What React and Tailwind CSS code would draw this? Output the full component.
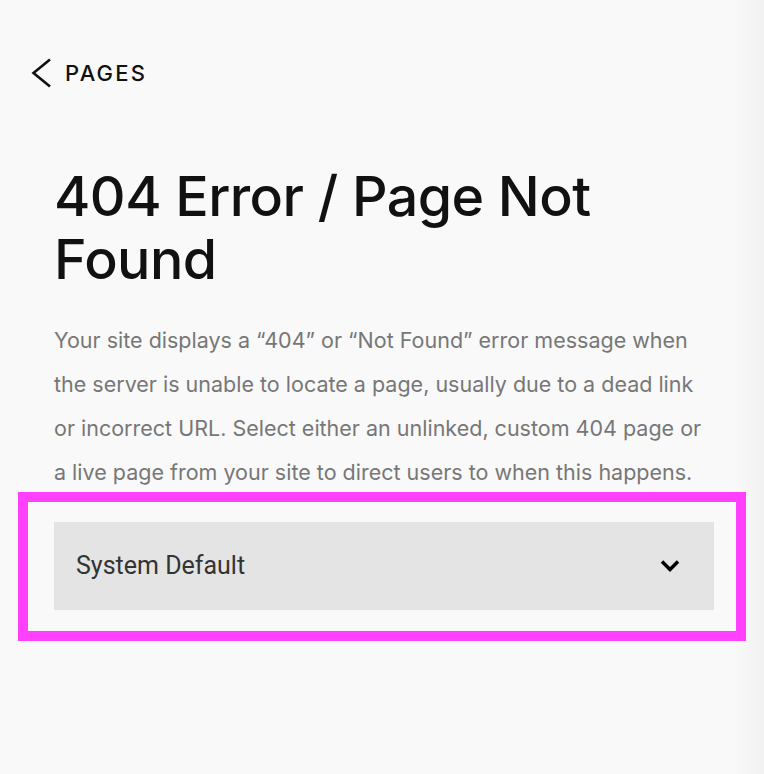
import React from "react";

export default function App() {
  return (
    <div
      className="relative w-[764px] h-[774px] overflow-hidden bg-[#f9f9f9]"
      style={{ fontFamily: "Inter, 'Noto Sans', sans-serif" }}
    >
      {/* faint shadow along the right edge */}
      <div className="absolute top-0 right-0 h-full w-[30px] bg-gradient-to-r from-[#f9f9f9] to-[#f1f1f1]" />

      <div className="relative pt-[58px] px-[54px]">
        <a href="#" className="flex items-center -ml-[23px] gap-[12px] text-[#111]">
          <svg width="22" height="30" viewBox="0 0 22 30" fill="none">
            <path d="M19 1.5 L2.5 15 L19 28.5" stroke="#111" strokeWidth="2.6" />
          </svg>
          <span className="text-[22px] font-medium tracking-[0.1em] leading-[30px]">PAGES</span>
        </a>

        <h1 className="mt-[76px] text-[55.5px] font-medium leading-[63px] tracking-[-0.01em] text-[#111]">
          404 Error / Page Not Found
        </h1>

        <p className="mt-[28px] text-[21.5px] leading-[44px] text-[#777]">
          Your site displays a “404” or “Not Found” error message when the server is unable to locate a
          page, usually due to a dead link or incorrect URL. Select either an unlinked, custom 404 page or
          a live page from your site to direct users to when this happens.
        </p>

        <div className="-mx-[36px] -mt-[2px] border-[10px] border-[#ff40ff] pt-[20px] pb-[21px] pl-[26px] pr-[22px]">
          <button className="flex w-full h-[88px] items-center justify-between bg-[#e4e4e4] pl-[22px] pr-[34px] text-left">
            <span
              className="text-[25px] text-[#333]"
              style={{ fontFamily: "Roboto, 'Liberation Sans', sans-serif" }}
            >
              System Default
            </span>
            <svg width="20" height="14" viewBox="0 0 20 14" fill="none">
              <path d="M2 2.5 L10 10.5 L18 2.5" stroke="#000" strokeWidth="3.5" />
            </svg>
          </button>
        </div>
      </div>
    </div>
  );
}
